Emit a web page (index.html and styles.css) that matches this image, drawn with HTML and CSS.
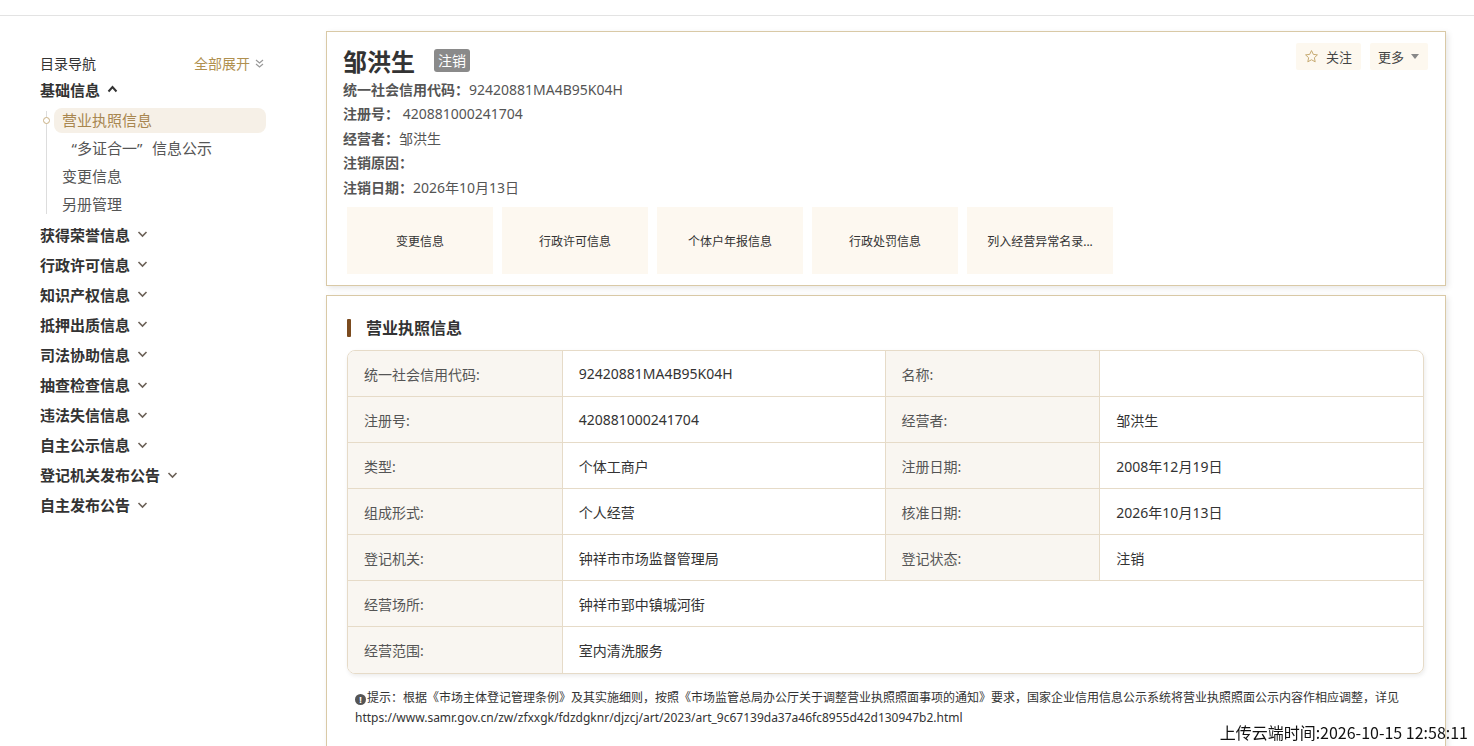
FILE: index.html
```html
<!DOCTYPE html>
<html lang="zh-CN">
<head>
    <meta charset="UTF-8">
    <meta name="viewport" content="width=device-width, initial-scale=1.0">
    <title>邹洪生 - 企业信用信息</title>
    <link rel="stylesheet" href="styles.css">
</head>
<body>
    <div class="topbar"></div>

    <div class="page">
        <!-- 左侧目录 -->
        <aside class="sidebar">
            <div class="nav-head">
                <span>目录导航</span>
                <span class="expand-all">全部展开
                    <svg width="9" height="9" viewBox="0 0 9 9"><polyline points="1,1 4.5,4 8,1" fill="none" stroke="#999" stroke-width="1.2"/><polyline points="1,5 4.5,8 8,5" fill="none" stroke="#999" stroke-width="1.2"/></svg>
                </span>
            </div>

            <div class="nav-group open">
                <div class="nav-title">基础信息
                    <svg class="chev" width="11" height="8" viewBox="0 0 11 8"><polyline points="1.5,6.5 5.5,2 9.5,6.5" fill="none" stroke="#333" stroke-width="2"/></svg>
                </div>
                <ul class="sub-list">
                    <li class="active"><span class="dot"></span>营业执照信息</li>
                    <li><span class="q-open">“</span>多证合一<span class="q-close">”</span>信息公示</li>
                    <li>变更信息</li>
                    <li>另册管理</li>
                </ul>
            </div>

            <div class="nav-title">获得荣誉信息 <svg class="chev" width="11" height="8" viewBox="0 0 11 8"><polyline points="1.5,2 5.5,6 9.5,2" fill="none" stroke="#6b6157" stroke-width="1.6"/></svg></div>
            <div class="nav-title">行政许可信息 <svg class="chev" width="11" height="8" viewBox="0 0 11 8"><polyline points="1.5,2 5.5,6 9.5,2" fill="none" stroke="#6b6157" stroke-width="1.6"/></svg></div>
            <div class="nav-title">知识产权信息 <svg class="chev" width="11" height="8" viewBox="0 0 11 8"><polyline points="1.5,2 5.5,6 9.5,2" fill="none" stroke="#6b6157" stroke-width="1.6"/></svg></div>
            <div class="nav-title">抵押出质信息 <svg class="chev" width="11" height="8" viewBox="0 0 11 8"><polyline points="1.5,2 5.5,6 9.5,2" fill="none" stroke="#6b6157" stroke-width="1.6"/></svg></div>
            <div class="nav-title">司法协助信息 <svg class="chev" width="11" height="8" viewBox="0 0 11 8"><polyline points="1.5,2 5.5,6 9.5,2" fill="none" stroke="#6b6157" stroke-width="1.6"/></svg></div>
            <div class="nav-title">抽查检查信息 <svg class="chev" width="11" height="8" viewBox="0 0 11 8"><polyline points="1.5,2 5.5,6 9.5,2" fill="none" stroke="#6b6157" stroke-width="1.6"/></svg></div>
            <div class="nav-title">违法失信信息 <svg class="chev" width="11" height="8" viewBox="0 0 11 8"><polyline points="1.5,2 5.5,6 9.5,2" fill="none" stroke="#6b6157" stroke-width="1.6"/></svg></div>
            <div class="nav-title">自主公示信息 <svg class="chev" width="11" height="8" viewBox="0 0 11 8"><polyline points="1.5,2 5.5,6 9.5,2" fill="none" stroke="#6b6157" stroke-width="1.6"/></svg></div>
            <div class="nav-title">登记机关发布公告 <svg class="chev" width="11" height="8" viewBox="0 0 11 8"><polyline points="1.5,2 5.5,6 9.5,2" fill="none" stroke="#6b6157" stroke-width="1.6"/></svg></div>
            <div class="nav-title">自主发布公告 <svg class="chev" width="11" height="8" viewBox="0 0 11 8"><polyline points="1.5,2 5.5,6 9.5,2" fill="none" stroke="#6b6157" stroke-width="1.6"/></svg></div>
        </aside>

        <main class="main">
            <!-- 头部信息卡 -->
            <section class="card head-card">
                <div class="head-row">
                    <div class="head-info">
                        <h1 class="ent-name">邹洪生 <span class="badge">注销</span></h1>
                        <div class="info-lines">
                            <p class="info-line"><b>统一社会信用代码：</b>92420881MA4B95K04H</p>
                            <p class="info-line"><b>注册号：</b> 420881000241704</p>
                            <p class="info-line"><b>经营者：</b>邹洪生</p>
                            <p class="info-line"><b>注销原因：</b></p>
                            <p class="info-line"><b>注销日期：</b>2026年10月13日</p>
                        </div>
                    </div>
                    <div class="head-actions">
                        <button class="act-btn">
                            <svg width="15" height="15" viewBox="0 0 24 24"><polygon points="12,2.5 14.9,8.6 21.5,9.4 16.6,13.9 17.9,20.5 12,17.2 6.1,20.5 7.4,13.9 2.5,9.4 9.1,8.6" fill="none" stroke="#c7ab72" stroke-width="1.6" stroke-linejoin="round"/></svg>
                            关注
                        </button>
                        <button class="act-btn">更多
                            <svg width="8" height="5" viewBox="0 0 8 5"><polygon points="0,0 8,0 4,5" fill="#888"/></svg>
                        </button>
                    </div>
                </div>
                <div class="tabs">
                    <div class="tab">变更信息</div>
                    <div class="tab">行政许可信息</div>
                    <div class="tab">个体户年报信息</div>
                    <div class="tab">行政处罚信息</div>
                    <div class="tab">列入经营异常名录...</div>
                </div>
            </section>

            <!-- 营业执照信息 -->
            <section class="card detail-card">
                <h2 class="sec-title">营业执照信息</h2>
                <table class="info-table">
                    <tr>
                        <td class="lbl">统一社会信用代码:</td>
                        <td class="val">92420881MA4B95K04H</td>
                        <td class="lbl">名称:</td>
                        <td class="val"></td>
                    </tr>
                    <tr>
                        <td class="lbl">注册号:</td>
                        <td class="val">420881000241704</td>
                        <td class="lbl">经营者:</td>
                        <td class="val">邹洪生</td>
                    </tr>
                    <tr>
                        <td class="lbl">类型:</td>
                        <td class="val">个体工商户</td>
                        <td class="lbl">注册日期:</td>
                        <td class="val">2008年12月19日</td>
                    </tr>
                    <tr>
                        <td class="lbl">组成形式:</td>
                        <td class="val">个人经营</td>
                        <td class="lbl">核准日期:</td>
                        <td class="val">2026年10月13日</td>
                    </tr>
                    <tr>
                        <td class="lbl">登记机关:</td>
                        <td class="val">钟祥市市场监督管理局</td>
                        <td class="lbl">登记状态:</td>
                        <td class="val">注销</td>
                    </tr>
                    <tr>
                        <td class="lbl">经营场所:</td>
                        <td class="val" colspan="3">钟祥市郢中镇城河街</td>
                    </tr>
                    <tr>
                        <td class="lbl">经营范围:</td>
                        <td class="val" colspan="3">室内清洗服务</td>
                    </tr>
                </table>
                <p class="tip"><span class="tip-icon">!</span>提示：根据《市场主体登记管理条例》及其实施细则，按照《市场监管总局办公厅关于调整营业执照照面事项的通知》要求，国家企业信用信息公示系统将营业执照照面公示内容作相应调整，详见<br>https://www.samr.gov.cn/zw/zfxxgk/fdzdgknr/djzcj/art/2023/art_9c67139da37a46fc8955d42d130947b2.html</p>
            </section>
        </main>
    </div>

    <div class="upload-time">上传云端时间:2026-10-15 12:58:11</div>
</body>
</html>
```

FILE: styles.css
```css
/* Reset */
* {
  box-sizing: border-box;
  margin: 0;
  padding: 0;
}

body {
  font-family: "Noto Sans", "Noto Sans CJK SC", sans-serif;
  font-size: 14px;
  color: #333;
  background-color: #fff;
  overflow: hidden;
}

ul {
  list-style: none;
}

/* Top divider */
.topbar {
  height: 16px;
  border-bottom: 1px solid #e3e3e3;
}

/* Page layout */
.page {
  display: flex;
  gap: 60px;
  padding: 15px 0 0 40px;
}

/* Sidebar */
.sidebar {
  width: 226px;
  flex-shrink: 0;
  padding-top: 22px;
}

.nav-head {
  display: flex;
  justify-content: space-between;
  align-items: center;
  height: 20px;
  font-size: 14px;
  color: #333;
}

.expand-all {
  color: #b0904f;
  display: flex;
  align-items: center;
  gap: 5px;
  margin-right: 2px;
}

.nav-title {
  display: flex;
  align-items: center;
  gap: 7px;
  height: 30.1px;
  font-size: 15px;
  font-weight: bold;
  color: #333;
}

.nav-group .nav-title {
  height: 24px;
  margin-top: 4px;
}

.sub-list {
  position: relative;
  margin: 7px 0 -1px;
  padding-left: 14px;
}

.sub-list::before {
  content: "";
  position: absolute;
  left: 6px;
  top: 3px;
  bottom: 3px;
  width: 1px;
  background-color: #ddd;
}

.sub-list li {
  position: relative;
  height: 25px;
  line-height: 25px;
  margin-bottom: 3px;
  padding-left: 8px;
  font-size: 15px;
  color: #555;
  border-radius: 8px;
}

.sub-list li.active {
  background-color: #f6f0e7;
  color: #a8864f;
}

.q-open,
.q-close {
  display: inline-block;
  width: 1em;
}

.q-open {
  text-align: right;
}

.q-close {
  text-align: left;
}

.sub-list .dot {
  position: absolute;
  left: -11px;
  top: 9px;
  width: 7px;
  height: 7px;
  border: 1px solid #c9b083;
  border-radius: 50%;
  background-color: #fff;
}

/* Main column */
.main {
  width: 1120px;
  flex-shrink: 0;
}

.card {
  background-color: #fff;
  border: 1px solid #d9c9a6;
  box-shadow: 2px 2px 6px rgba(0, 0, 0, 0.1);
}

/* Header card */
.head-card {
  padding: 12px 17px 11px 16px;
}

.head-row {
  display: flex;
  justify-content: space-between;
}

.ent-name {
  display: flex;
  align-items: center;
  height: 32px;
  font-size: 24px;
  font-weight: bold;
  color: #333;
}

.badge {
  margin-left: 19px;
  padding: 0 4px;
  height: 23px;
  line-height: 23px;
  font-size: 14px;
  font-weight: normal;
  color: #fff;
  background-color: #8a8a8a;
  border-radius: 3px;
}

.info-lines {
  margin-top: 1.5px;
}

.info-line {
  height: 24.5px;
  line-height: 24.5px;
  color: #555;
}

.info-line b {
  color: #555;
}

.head-actions {
  display: flex;
  gap: 9px;
  margin-top: -1px;
}

.act-btn {
  display: flex;
  align-items: center;
  gap: 7px;
  height: 27px;
  padding: 0 9px 0 8px;
  font-family: inherit;
  font-size: 13px;
  color: #444;
  background-color: #fdf8ef;
  border: none;
  border-radius: 2px;
}

.tabs {
  display: flex;
  gap: 9px;
  margin: 7px 0 0 4px;
}

.tab {
  width: 146px;
  height: 67px;
  display: flex;
  align-items: center;
  justify-content: center;
  font-size: 12px;
  color: #333;
  background-color: #fdf8f0;
}

/* Detail card */
.detail-card {
  margin-top: 9px;
  padding: 21px 21px 20px 20px;
}

.sec-title {
  position: relative;
  height: 22px;
  line-height: 22px;
  padding-left: 19px;
  font-size: 16px;
  font-weight: bold;
  color: #333;
}

.sec-title::before {
  content: "";
  position: absolute;
  left: 0;
  top: 2px;
  width: 4px;
  height: 18px;
  background-color: #7b4b1f;
  border-radius: 1px;
}

.info-table {
  width: 1077px;
  margin-top: 11px;
  border-collapse: separate;
  border-spacing: 0;
  border: 1px solid #e6dbc8;
  border-radius: 8px;
  box-shadow: 1px 2px 4px rgba(0, 0, 0, 0.08);
  overflow: hidden;
}

.info-table td {
  height: 46px;
  padding: 0 16px;
  font-size: 14px;
  border-right: 1px solid #e6dbc8;
  border-bottom: 1px solid #e6dbc8;
}

.info-table tr:last-child td {
  border-bottom: none;
}

.info-table td:last-child {
  border-right: none;
}

.info-table .lbl {
  width: 215px;
  color: #555;
  background-color: #f9f6f1;
}

.info-table .val {
  width: 323px;
  color: #333;
}

.tip {
  margin-top: 14px;
  padding-left: 8px;
  font-size: 12px;
  line-height: 20px;
  color: #333;
}

.tip-icon {
  display: inline-block;
  width: 11px;
  height: 11px;
  margin-right: 1px;
  line-height: 11px;
  text-align: center;
  font-size: 9px;
  font-weight: bold;
  color: #fff;
  background-color: #555;
  border-radius: 50%;
  vertical-align: -1px;
}

/* Floating upload stamp */
.upload-time {
  position: fixed;
  right: 6px;
  bottom: 3px;
  font-family: "Noto Sans CJK SC", sans-serif;
  font-size: 16px;
  line-height: 22px;
  color: #111;
}
```
